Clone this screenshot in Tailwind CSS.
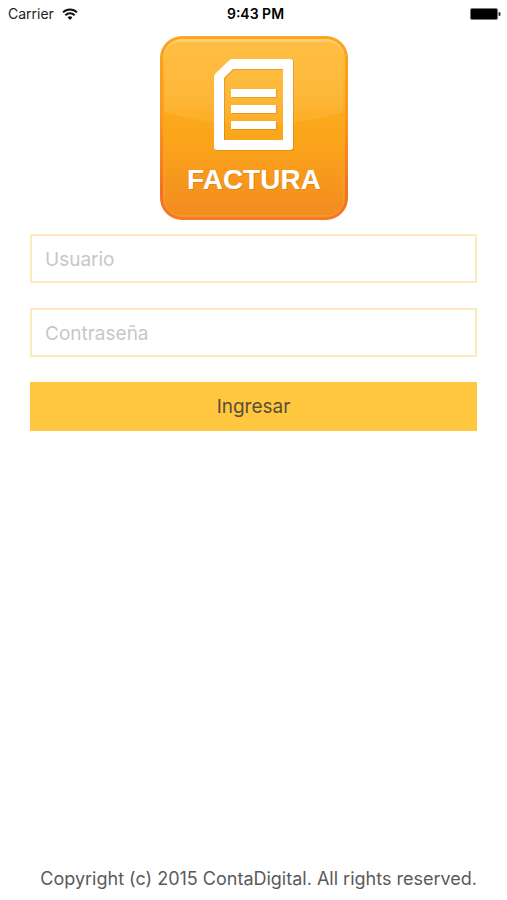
<!DOCTYPE html>
<html lang="es">
<head>
<meta charset="utf-8">
<meta name="viewport" content="width=device-width, initial-scale=1">
<title>Factura</title>
<script src="https://cdn.jsdelivr.net/npm/@tailwindcss/browser@4"></script>
</head>
<body class="flex min-h-screen flex-col bg-white font-['Inter','Liberation_Sans',sans-serif] text-[#5a5a5a]">
  <header class="grid h-7 grid-cols-3 items-center pr-1.5 pl-2 text-sm text-[#222]">
    <div class="flex items-center gap-2">
      <span>Carrier</span>
      <svg class="h-3 w-4" viewBox="0 0 16 12" fill="none" stroke="#111" stroke-width="2" aria-label="Wi-Fi">
        <path d="M1 4.4A10 10 0 0 1 15 4.4"/>
        <path d="M3.4 7.3A6.4 6.4 0 0 1 12.6 7.3"/>
        <path d="M8 12L5.6 9.4A3.4 3.4 0 0 1 10.4 9.4Z" fill="#111" stroke="none"/>
      </svg>
    </div>
    <span class="pl-0.5 text-center font-semibold text-black">9:43 PM</span>
    <svg class="h-3 w-8 justify-self-end" viewBox="0 0 32 12" aria-label="Batería">
      <rect x="1.5" y=".5" width="27" height="11" rx="1.5" fill="#000" stroke="#777" stroke-width="1"/>
      <path d="M29.6 4h.6a1.4 2 0 0 1 0 4h-.6z" fill="#222"/>
    </svg>
  </header>

  <main class="flex flex-1 flex-col px-[30px] pt-2">
    <svg class="h-[184px] w-[188px] self-center" viewBox="0 0 188 184" role="img" aria-label="Factura">
      <defs>
        <linearGradient id="edge" x1="0" y1="0" x2="0" y2="1">
          <stop offset="0" stop-color="#fba61c"/>
          <stop offset=".45" stop-color="#f9981d"/>
          <stop offset=".85" stop-color="#f37021"/>
          <stop offset="1" stop-color="#f47a21"/>
        </linearGradient>
        <linearGradient id="face" x1="0" y1="0" x2="0" y2="1">
          <stop offset="0" stop-color="#fdb022"/>
          <stop offset=".55" stop-color="#fba61a"/>
          <stop offset="1" stop-color="#f28c20"/>
        </linearGradient>
        <linearGradient id="rim" x1="0" y1="0" x2="0" y2="1">
          <stop offset="0" stop-color="#ffd173"/>
          <stop offset=".12" stop-color="#fdb93a"/>
          <stop offset=".5" stop-color="#fba320"/>
          <stop offset="1" stop-color="#f7942c"/>
        </linearGradient>
        <linearGradient id="gloss" x1="0" y1="0" x2="0" y2="1">
          <stop offset="0" stop-color="#ffc453" stop-opacity=".65"/>
          <stop offset=".6" stop-color="#ffc453" stop-opacity=".55"/>
          <stop offset="1" stop-color="#ffc453" stop-opacity=".2"/>
        </linearGradient>
        <clipPath id="inside"><rect x="5" y="6" width="178" height="173" rx="16"/></clipPath>
      </defs>
      <rect width="188" height="184" rx="22" fill="url(#edge)"/>
      <rect x="3" y="3" width="182" height="178" rx="19" fill="url(#rim)"/>
      <rect x="5" y="6" width="178" height="173" rx="16" fill="url(#face)"/>
      <path d="M0 6H188V75Q94 103 0 75Z" fill="url(#gloss)" clip-path="url(#inside)"/>
      <g fill="#b85c00" fill-opacity=".3" transform="translate(1 1)">
        <path fill-rule="evenodd" d="M72 23H130Q133 23 133 26V111Q133 114 130 114H57Q54 114 54 111V41Q54 39 55.500 37.500L69 24.500Q70.500 23 72 23ZM73 33L64 42V104H123V33Z"/>
        <path d="M71 53H116V61H71ZM71 69H116V77H71ZM71 85H116V93H71Z"/>
        <text x="94" y="153" text-anchor="middle" class="font-['Liberation_Sans',sans-serif] text-[28px] font-bold">FACTURA</text>
      </g>
      <g fill="#fff">
        <path fill-rule="evenodd" d="M72 23H130Q133 23 133 26V111Q133 114 130 114H57Q54 114 54 111V41Q54 39 55.500 37.500L69 24.500Q70.500 23 72 23ZM73 33L64 42V104H123V33Z"/>
        <path d="M71 53H116V61H71ZM71 69H116V77H71ZM71 85H116V93H71Z"/>
        <text x="94" y="153" text-anchor="middle" class="font-['Liberation_Sans',sans-serif] text-[28px] font-bold">FACTURA</text>
      </g>
    </svg>

    <form class="mt-3.5 flex flex-col gap-[25px]">
      <input aria-label="Usuario" type="text" placeholder="Usuario" class="h-[49px] w-full border-2 border-[#fee8bd] px-[13px] pt-0.5 text-[19px] outline-none placeholder:text-[#c7c7c9]">
      <input aria-label="Contraseña" type="password" placeholder="Contraseña" class="h-[49px] w-full border-2 border-[#fee8bd] px-[13px] pt-0.5 text-[19px] outline-none placeholder:text-[#c7c7c9]">
      <button type="button" class="h-[49px] w-full bg-[#ffc640] pt-0.5 text-[19px] text-[#5a4f38]">Ingresar</button>
    </form>
  </main>

  <footer class="px-[30px] pb-[7px] text-right text-lg leading-7">Copyright (c) 2015 ContaDigital. All rights reserved.</footer>
</body>
</html>
